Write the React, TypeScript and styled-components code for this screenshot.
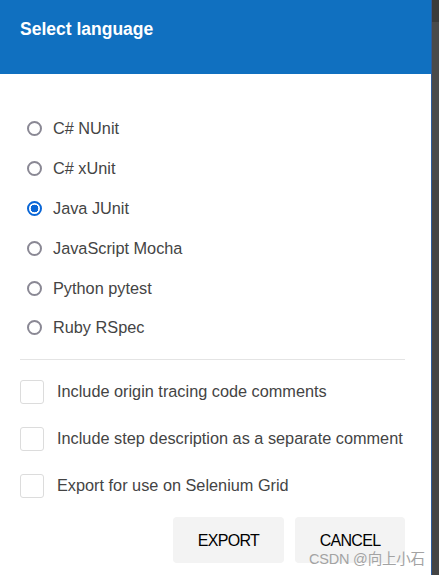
import React, { useState } from "react";
import styled, { createGlobalStyle, css } from "styled-components";

// --- GLOBAL -------------------------------------------------------------------------------------
const GlobalStyle = createGlobalStyle`
	html, body {
		margin: 0;
		padding: 0;
		background: #ffffff;
		overflow: hidden;
	}
	body {
		font-family: "Liberation Sans", Arial, sans-serif;
	}
`;

const Page = styled.div`
	display: flex;
	flex-direction: row;
	width: 439px;
	height: 575px;
`;

// --- DIALOG -------------------------------------------------------------------------------------
const Dialog = styled.div`
	position: relative;
	display: flex;
	flex-direction: column;
	width: 431px;
	height: 575px;
	background: #ffffff;
`;

const Header = styled.div`
	height: 74px;
	box-sizing: border-box;
	padding: 18px 20px 0;
	background-color: #1070c0;
	color: #ffffff;
	font-weight: 700;
	font-size: 17.5px;
	line-height: 22px;
`;

const Body = styled.div`
	display: flex;
	flex-direction: column;
	padding: 35px 26px 0 20px;
`;

// --- RADIO GROUP --------------------------------------------------------------------------------
const RadioList = styled.div`
	display: flex;
	flex-direction: column;
	padding-left: 7px;
`;

const RadioRow = styled.label`
	display: flex;
	flex-direction: row;
	align-items: center;
	gap: 11px;
	height: 39.8px;
	cursor: pointer;
`;

const RadioCircle = styled.span<{ selected?: boolean }>`
	box-sizing: border-box;
	width: 15px;
	height: 15px;
	border-radius: 50%;
	border: 2px solid #8a8894;
	background: #ffffff;
	${(props) =>
		props.selected &&
		css`
			border-color: #0a66d6;
			background: radial-gradient(circle, #0a66d6 0 3.6px, #ffffff 4.1px);
		`}
`;

const OptionText = styled.span`
	font-size: 16.3px;
	color: #444444;
`;

const Divider = styled.div`
	height: 1px;
	margin: 11px 0 0;
	background-color: #e4e4e4;
`;

// --- CHECKBOXES ---------------------------------------------------------------------------------
const CheckList = styled.div`
	display: flex;
	flex-direction: column;
	gap: 23px;
	padding-top: 20px;
`;

const CheckRow = styled.label`
	display: flex;
	flex-direction: row;
	align-items: center;
	gap: 13px;
	height: 24px;
	cursor: pointer;
`;

const CheckBox = styled.span`
	box-sizing: border-box;
	width: 24px;
	height: 24px;
	border: 1px solid #dcdcdc;
	border-radius: 3px;
	background: #ffffff;
`;

const CheckText = styled.span`
	font-size: 16.3px;
	color: #444444;
	white-space: nowrap;
`;

// --- BUTTONS ------------------------------------------------------------------------------------
const Actions = styled.div`
	display: flex;
	flex-direction: row;
	justify-content: flex-end;
	gap: 11px;
	padding-top: 19px;
`;

const Button = styled.button<{ wide?: boolean }>`
	width: ${(props) => (props.wide ? 111 : 110)}px;
	height: 46px;
	padding: 2px 0 0;
	border: none;
	border-radius: 4px;
	background-color: #f3f3f3;
	color: #000000;
	font-family: "Liberation Sans", Arial, sans-serif;
	font-size: 16px;
	letter-spacing: -0.7px;
	cursor: pointer;
`;

const Watermark = styled.div`
	position: absolute;
	left: 309px;
	top: 551px;
	padding-right: 4px;
	font-family: "Liberation Sans", "Noto Sans CJK SC", sans-serif;
	font-size: 14.5px;
	line-height: 16px;
	color: #a3a3a3;
	letter-spacing: -0.2px;
`;

// --- BACKGROUND STRIP ---------------------------------------------------------------------------
const SideStrip = styled.div`
	flex: 1;
	border-left: 1px solid #2d5a9a;
	background: linear-gradient(
		to bottom,
		#3b3b3b 0,
		#3b3b3b 22px,
		#4a4a4a 22px,
		#4a4a4a 180px,
		#444444 180px,
		#444444 100%
	);
`;

const languages = [
	"C# NUnit",
	"C# xUnit",
	"Java JUnit",
	"JavaScript Mocha",
	"Python pytest",
	"Ruby RSpec",
];

const options = [
	"Include origin tracing code comments",
	"Include step description as a separate comment",
	"Export for use on Selenium Grid",
];

export default function App() {
	const [selected, setSelected] = useState("Java JUnit");

	return (
		<>
			<GlobalStyle />
			<Page>
				<Dialog>
					<Header>Select language</Header>
					<Body>
						<RadioList>
							{languages.map((lang) => (
								<RadioRow key={lang} onClick={() => setSelected(lang)}>
									<RadioCircle selected={lang === selected} />
									<OptionText>{lang}</OptionText>
								</RadioRow>
							))}
						</RadioList>
						<Divider />
						<CheckList>
							{options.map((opt) => (
								<CheckRow key={opt}>
									<CheckBox />
									<CheckText>{opt}</CheckText>
								</CheckRow>
							))}
						</CheckList>
						<Actions>
							<Button wide>EXPORT</Button>
							<Button>CANCEL</Button>
						</Actions>
					</Body>
					<Watermark>CSDN @向上小石</Watermark>
				</Dialog>
				<SideStrip />
			</Page>
		</>
	);
}
